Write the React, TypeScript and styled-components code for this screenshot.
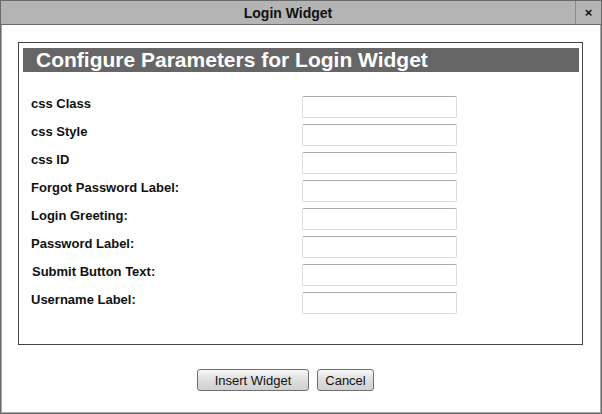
import React from "react";
import styled, { createGlobalStyle } from "styled-components";

const Global = createGlobalStyle`
  html, body { margin: 0; padding: 0; background: #fff; }
  body { font-family: "Liberation Sans", Arial, sans-serif; }
  * { box-sizing: border-box; }
`;

const Window = styled.div`
  width: 602px;
  height: 414px;
  border: 1px solid #6a6a6a;
  box-shadow: inset 0 0 0 1px #a8a8a8;
  background: #fff;
  display: flex;
  flex-direction: column;
  padding: 1px;
`;

const TitleBar = styled.div`
  height: 24px;
  margin: -1px -1px 0 -1px;
  background: #b4b4b4;
  border-bottom: 1px solid #6a6a6a;
  display: flex;
  align-items: stretch;
`;

const TitleText = styled.div`
  flex: 1;
  display: flex;
  align-items: center;
  justify-content: center;
  font-weight: bold;
  font-size: 14px;
  color: #111;
`;

const CloseCell = styled.div`
  width: 26px;
  border-left: 1px solid #8a8a8a;
  display: flex;
  align-items: center;
  justify-content: center;
  font-weight: bold;
  font-size: 13px;
  color: #111;
`;

const Body = styled.div`
  flex: 1;
  padding: 17px 17px 0 16px;
  display: flex;
  flex-direction: column;
`;

const Panel = styled.div`
  border: 1px solid #444;
  padding: 5px 3px 30px 4px;
  height: 303px;
`;

const Header = styled.div`
  height: 24px;
  background: #666;
  color: #fff;
  font-weight: bold;
  font-size: 21px;
  line-height: 24px;
  padding-left: 13px;
  white-space: nowrap;
`;

const Form = styled.div`
  display: grid;
  grid-template-columns: 271px 155px;
  row-gap: 6px;
  margin-top: 24px;
  padding-left: 8px;
`;

const Label = styled.label<{ $indent?: number }>`
  font-weight: bold;
  font-size: 13px;
  color: #111;
  padding-left: ${(p) => p.$indent ?? 0}px;
  line-height: 15px;
  align-self: start;
`;

const Input = styled.input`
  width: 155px;
  height: 22px;
  border: 1px solid #dcdcdc;
  border-top-color: #aaa;
  border-radius: 2px;
  background: #fff;
  padding: 0 3px;
  font-size: 12px;
  outline: none;
`;

const ButtonRow = styled.div`
  display: flex;
  gap: 8px;
  padding-left: 179px;
  margin-top: 24px;
`;

const Button = styled.button<{ $w: number }>`
  width: ${(p) => p.$w}px;
  height: 22px;
  border: 1px solid #707070;
  border-radius: 3px;
  background: linear-gradient(#f6f6f6, #dedede 50%, #d0d0d0);
  font-family: "Liberation Sans", Arial, sans-serif;
  font-size: 13px;
  color: #111;
  padding: 0;
`;

const fields = [
  "css Class",
  "css Style",
  "css ID",
  "Forgot Password Label:",
  "Login Greeting:",
  "Password Label:",
  "Submit Button Text:",
  "Username Label:",
];

export default function App() {
  return (
    <>
      <Global />
      <Window>
        <TitleBar>
          <TitleText>Login Widget</TitleText>
          <CloseCell>×</CloseCell>
        </TitleBar>
        <Body>
          <Panel>
            <Header>Configure Parameters for Login Widget</Header>
            <Form>
              {fields.map((f) => (
                <React.Fragment key={f}>
                  <Label $indent={f.startsWith("Submit") ? 1 : 0}>{f}</Label>
                  <Input type="text" />
                </React.Fragment>
              ))}
            </Form>
          </Panel>
          <ButtonRow>
            <Button $w={112}>Insert Widget</Button>
            <Button $w={57}>Cancel</Button>
          </ButtonRow>
        </Body>
      </Window>
    </>
  );
}
